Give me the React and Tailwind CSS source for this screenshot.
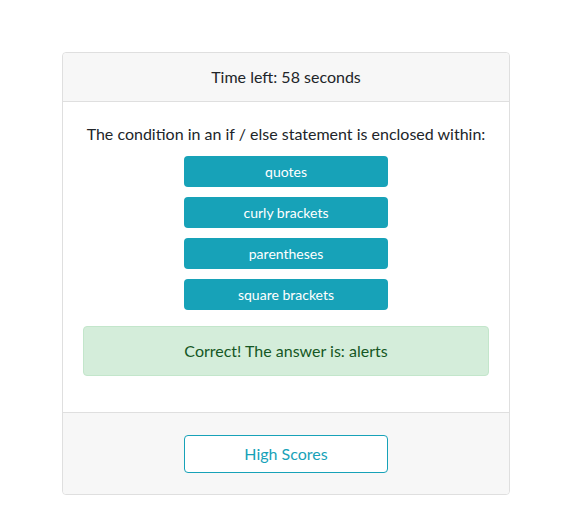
import React from 'react';

const ANSWERS = ['quotes', 'curly brackets', 'parentheses', 'square brackets'];

export default function App() {
  return (
    <div
      className="min-h-screen bg-white pt-[52px] pl-[62px] text-[#212529]"
      style={{ fontFamily: 'Lato, "Liberation Sans", sans-serif' }}
    >
      <div className="w-[448px] rounded border border-[#dfdfdf] bg-white">
        {/* Header */}
        <div className="rounded-t border-b border-[#dfdfdf] bg-[#f7f7f7] py-3 text-center text-base leading-6">
          Time left: 58 seconds
        </div>

        {/* Body */}
        <div className="px-5 pt-5 pb-5 text-center">
          <p className="text-base leading-6">The condition in an if / else statement is enclosed within:</p>
          <div className="mt-[10px] flex flex-col items-center gap-[10px]">
            {ANSWERS.map((a) => (
              <button
                key={a}
                className="h-[31px] w-[204px] rounded bg-[#17a2b8] text-sm leading-[21px] text-white"
              >
                {a}
              </button>
            ))}
          </div>
          <div className="mt-4 mb-4 rounded border border-[#c3e6cb] bg-[#d4edda] py-3 text-base leading-6 text-[#155724]">
            Correct! The answer is: alerts
          </div>
        </div>

        {/* Footer */}
        <div className="flex justify-center rounded-b border-t border-[#dfdfdf] bg-[#f7f7f7] pt-[22px] pb-[21px]">
          <button className="h-[38px] w-[204px] rounded border border-[#17a2b8] bg-white text-base leading-6 text-[#17a2b8]">
            High Scores
          </button>
        </div>
      </div>
    </div>
  );
}
